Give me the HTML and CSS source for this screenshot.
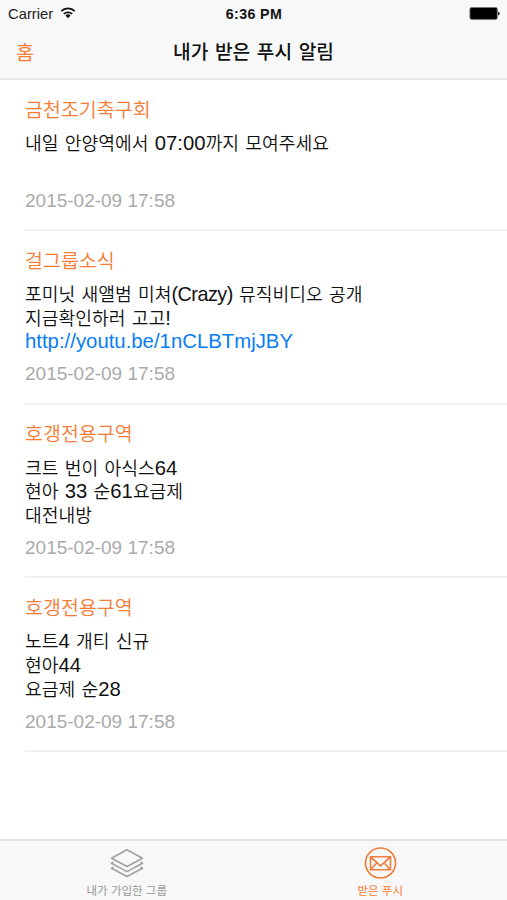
FILE: index.html
```html
<!DOCTYPE html>
<html lang="ko">
<head>
<meta charset="utf-8">
<title>내가 받은 푸시 알림</title>
<link rel="stylesheet" href="styles.css">
</head>
<body>
<header class="header">
  <div class="status">
    <div class="carrier">Carrier
      <svg class="wifi" width="16" height="12" viewBox="0 0 16 12"><g fill="none" stroke="#111" stroke-width="1.7"><path d="M1.2 4.2a9.700 9.700 0 0 1 13.600 0"/><path d="M3.800 7a6 6 0 0 1 8.400 0"/></g><path d="M5.400 8.600a3.700 3.700 0 0 1 5.200 0L8 11.300z" fill="#111"/></svg>
    </div>
    <div class="clock">6:36 PM</div>
    <svg class="battery" width="31" height="13" viewBox="0 0 31 13"><rect x=".9" y=".4" width="27.400" height="12" rx="1.600" fill="#000" stroke="#777" stroke-width=".8"/><path d="M29 4.600q1.700.3 1.700 1.900t-1.700 1.900z" fill="#222"/></svg>
  </div>
  <div class="nav">
    <a class="home">홈</a>
    <h1 class="heading">내가 받은 푸시 알림</h1>
    <span></span>
  </div>
</header>
<main class="list">
  <article class="item">
    <h2 class="group">금천조기축구회</h2>
    <div class="body"><p>내일 안양역에서 <span class="latin">07:00</span>까지 모여주세요</p></div>
    <time class="date">2015-02-09 17:58</time>
  </article>
  <article class="item">
    <h2 class="group">걸그룹소식</h2>
    <div class="body"><p>포미닛 새앨범 미쳐<span class="latin tight">(Crazy)</span> 뮤직비디오 공개</p><p>지금확인하러 고고<span class="latin">!</span></p><p><a class="latin link">http://youtu.be/1nCLBTmjJBY</a></p></div>
    <time class="date">2015-02-09 17:58</time>
  </article>
  <article class="item">
    <h2 class="group">호갱전용구역</h2>
    <div class="body"><p>크트 번이 아식스<span class="latin">64</span></p><p>현아 <span class="latin">33</span> 순<span class="latin">61</span>요금제</p><p>대전내방</p></div>
    <time class="date">2015-02-09 17:58</time>
  </article>
  <article class="item">
    <h2 class="group">호갱전용구역</h2>
    <div class="body"><p>노트<span class="latin">4</span> 개티 신규</p><p>현아<span class="latin">44</span></p><p>요금제 순<span class="latin">28</span></p></div>
    <time class="date">2015-02-09 17:58</time>
  </article>
</main>
<nav class="tabs">
  <a class="tab">
    <svg width="36" height="34" viewBox="0 0 36 34" fill="none" stroke="#a0a0a0" stroke-width="1.6" stroke-linejoin="round"><path d="M18 3.800 33.500 12.200 18 20.500 2.500 12.200z"/><path d="M4.500 16.200 2.500 17.300 18 25.600l15.500-8.300-2-1.100"/><path d="M4.500 21.100 2.500 22.200 18 30.500l15.500-8.300-2-1.100"/></svg>
    <span>내가 가입한 그룹</span>
  </a>
  <a class="tab active">
    <svg width="36" height="34" viewBox="0 0 36 34" fill="none" stroke="#ef7d3c" stroke-width="1.600"><circle cx="18.500" cy="17" r="15"/><path d="M8.500 10.800h20v13h-20zM8.500 10.800l10 9 10-9M8.500 23.800l6.500-7M28.500 23.800l-6.500-7"/></svg>
    <span>받은 푸시</span>
  </a>
</nav>
</body>
</html>
```

FILE: styles.css
```css
* { box-sizing: border-box; margin: 0; padding: 0; }
body {
  display: flex;
  flex-direction: column;
  height: 900px;
  background: #fff;
  color: #111;
  font-family: "Noto Sans CJK KR", sans-serif;
  overflow: hidden;
}
.header { height: 80px; background: #f8f8f8; border-bottom: 2px solid #e6e6e6; }
.status, .nav { display: grid; grid-template-columns: 1fr auto 1fr; align-items: center; }
.status { height: 27px; padding: 0 7px 0 8px; font-family: "Liberation Sans", sans-serif; font-size: 14px; }
.carrier { display: flex; align-items: center; gap: 7px; font-size: 14.800px; color: #222; }
.wifi { margin-top: -2px; }
.clock { font-weight: bold; font-size: 14.200px; letter-spacing: .4px; }
.battery { justify-self: end; }
.nav { height: 48px; padding: 0 16px; }
.home { color: #f57c35; font-size: 19.500px; }
.heading { font-size: 19.200px; font-weight: 500; word-spacing: 1.200px; line-height: 28px; }
.list { flex: 1; }
.item {
  display: flex;
  flex-direction: column;
  height: 173.700px;
  margin-left: 25px;
  padding-top: 15.700px;
  border-bottom: 2px solid #efefef;
}
.item:first-child { height: 151px; }
.group { color: #f57c35; font-size: 19.500px; font-weight: 350; line-height: 26px; margin-bottom: 9.300px; }
.body { min-height: 47.200px; font-size: 18.200px; font-weight: 350; word-spacing: 1.200px; }
.body p { height: 23.600px; line-height: 23.600px; white-space: nowrap; }
.latin { font-family: "Liberation Sans", sans-serif; font-size: 20.280px; line-height: 1; }
.tight { font-size: 19.800px; letter-spacing: -.5px; }
.link { color: #087df8; font-size: 20.350px; }
.date { margin-top: 9.400px; color: #aaa; font: 19px/24px "Liberation Sans", sans-serif; }
.item:first-child .date { margin-top: 10.400px; }
.tabs { display: grid; grid-template-columns: 1fr 1fr; height: 61px; background: #f8f8f8; border-top: 2px solid #e2e2e2; }
.tab { display: flex; flex-direction: column; align-items: center; padding-top: 5px; color: #999; font-size: 11.500px; line-height: 20px; }
.tab svg { flex: none; }
.active { color: #f57c35; }
```
